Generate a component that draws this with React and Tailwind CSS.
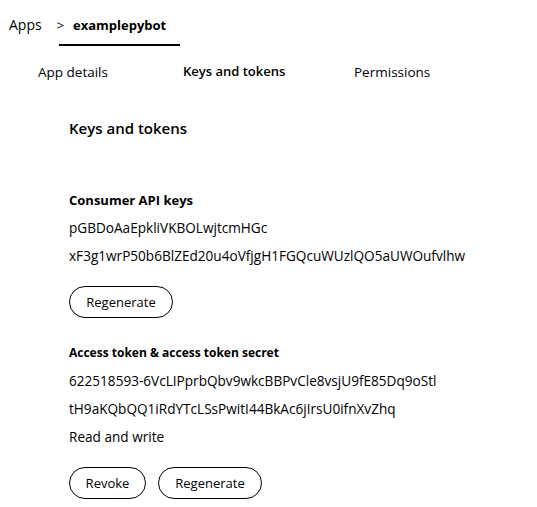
import React from "react";

const tabs = [
  { label: "App details", active: false, className: "w-[145px]" },
  { label: "Keys and tokens", active: true, className: "w-[171px]" },
  { label: "Permissions", active: false, className: "" },
];

const PillButton = ({ children, className = "" }) => (
  <button
    type="button"
    className={`h-[32px] rounded-full border border-black bg-white text-[13px] text-black ${className}`}
  >
    {children}
  </button>
);

const App = () => {
  return (
    <div className="w-[537px] h-[507px] bg-white text-black font-['Open_Sans',sans-serif] overflow-hidden">
      {/* breadcrumb */}
      <div className="flex items-end h-[46px]">
        <span className="ml-[9px] mb-[11px] text-[14px]">Apps</span>
        <span className="ml-[15px] mb-[11px] text-[13px]">&gt;</span>
        <div className="-ml-[5px] w-[121px] flex flex-col items-center">
          <span className="text-[13px] font-bold mb-[9px]">examplepybot</span>
          <div className="w-full h-[2px] bg-black" />
        </div>
      </div>

      {/* tabs */}
      <div className="flex pl-[38px] mt-[16px] text-[13.5px]">
        {tabs.map((t) => (
          <span key={t.label} className={`${t.className} ${t.active ? "font-semibold text-[13px]" : ""}`}>
            {t.label}
          </span>
        ))}
      </div>

      {/* content */}
      <div className="pl-[69px] mt-[34px]">
        <h1 className="text-[15px] font-semibold leading-[24px]">Keys and tokens</h1>

        <h2 className="mt-[50px] text-[13px] font-bold leading-[20px]">Consumer API keys</h2>
        <div className="text-[13.6px] leading-[28px] mt-[4px]">
          <p>pGBDoAaEpkliVKBOLwjtcmHGc</p>
          <p>xF3g1wrP50b6BlZEd20u4oVfjgH1FGQcuWUzlQO5aUWOufvlhw</p>
        </div>
        <div className="flex mt-[16px]">
          <PillButton className="w-[104px]">Regenerate</PillButton>
        </div>

        <h2 className="mt-[25px] text-[12px] font-bold leading-[20px]">Access token &amp; access token secret</h2>
        <div className="text-[13.6px] leading-[28px] mt-[4px]">
          <p>622518593-6VcLIPprbQbv9wkcBBPvCle8vsjU9fE85Dq9oStl</p>
          <p>tH9aKQbQQ1iRdYTcLSsPwitI44BkAc6jIrsU0ifnXvZhq</p>
          <p>Read and write</p>
        </div>
        <div className="flex gap-[12px] mt-[16px]">
          <PillButton className="w-[77px]">Revoke</PillButton>
          <PillButton className="w-[104px]">Regenerate</PillButton>
        </div>
      </div>
    </div>
  );
};

export default App;
